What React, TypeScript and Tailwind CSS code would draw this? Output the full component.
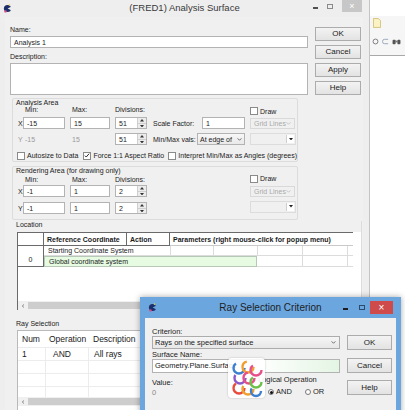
import React from 'react';

function AppIcon({ notch = '#eeeeee', className = '' }: { notch?: string; className?: string }) {
  return (
    <svg viewBox="0 0 10 10" className={`w-[9px] h-[9px] shrink-0 ${className}`}>
      <circle cx="5" cy="5" r="4" fill="#1d2f6b" />
      <path d="M5.2 5 L10 2.6 L10 7.4 Z" fill={notch} />
      <circle cx="2.8" cy="8.2" r="1.3" fill="#e0488a" />
      <circle cx="7.2" cy="1.2" r="0.9" fill="#e8c840" />
    </svg>
  );
}

function Chevron({ color = '#444' }: { color?: string }) {
  return (
    <svg viewBox="0 0 6 4" className="w-[5px] h-[3px]">
      <path d="M0.5 0.5 L3 3 L5.5 0.5" stroke={color} strokeWidth="1" fill="none" />
    </svg>
  );
}

function TextBox({ value = '', className = '' }: { value?: string; className?: string }) {
  return (
    <div className={`h-[12px] shrink-0 bg-white border border-[#b3b3b3] flex items-center pl-[3px] text-[7px] leading-none text-[#1b1b1b] ${className}`}>
      {value}
    </div>
  );
}

function SpinBox({ value, className = '' }: { value: string; className?: string }) {
  return (
    <div className={`h-[12px] shrink-0 bg-white border border-[#b3b3b3] flex ${className}`}>
      <span className="flex-1 pl-[3px] flex items-center text-[7px] leading-none">{value}</span>
      <div className="w-[9px] flex flex-col border-l border-[#cfcfcf] bg-[#ececec]">
        <div className="flex-1 flex items-center justify-center">
          <svg viewBox="0 0 5 3" className="w-[4px] h-[2.5px]"><path d="M0 3 L2.5 0 L5 3 Z" fill="#333" /></svg>
        </div>
        <div className="flex-1 flex items-center justify-center border-t border-[#cfcfcf]">
          <svg viewBox="0 0 5 3" className="w-[4px] h-[2.5px]"><path d="M0 0 L2.5 3 L5 0 Z" fill="#333" /></svg>
        </div>
      </div>
    </div>
  );
}

function GridCombo({ className = '' }: { className?: string }) {
  return (
    <div className={`h-[11px] shrink-0 bg-[#f0f0f0] border border-[#d9d9d9] flex items-center justify-between px-[3px] text-[7px] leading-none text-[#a9a9a9] ${className}`}>
      <span>Grid Lines</span>
      <Chevron color="#b5b5b5" />
    </div>
  );
}

function EmptyCombo({ className = '' }: { className?: string }) {
  return (
    <div className={`h-[12px] shrink-0 bg-[#f0f0f0] border border-[#dcdcdc] flex items-center justify-end pr-[1px] ${className}`}>
      <div className="w-[8px] h-[8px] bg-white border-l border-[#cfcfcf] flex items-center justify-center">
        <svg viewBox="0 0 5 3" className="w-[4px] h-[2.5px]"><path d="M0 0 L2.5 3 L5 0 Z" fill="#222" /></svg>
      </div>
    </div>
  );
}

function Check({ checked = false, label, className = '' }: { checked?: boolean; label: string; className?: string }) {
  return (
    <div className={`flex items-center gap-[2px] shrink-0 ${className}`}>
      <div className="w-[8px] h-[8px] bg-white border border-[#8a8a8a] flex items-center justify-center">
        {checked && (
          <svg viewBox="0 0 8 8" className="w-[7px] h-[7px]">
            <path d="M1.2 4.2 L3 6 L6.8 1.6" stroke="#222" strokeWidth="1.3" fill="none" />
          </svg>
        )}
      </div>
      <span className="text-[7px] leading-none">{label}</span>
    </div>
  );
}

function Btn({ label, className = '' }: { label: string; className?: string }) {
  return (
    <div className={`shrink-0 border border-[#acacac] bg-linear-to-b from-[#f3f3f3] to-[#e3e3e3] flex items-center justify-center text-[8px] leading-none text-[#1b1b1b] ${className}`}>
      {label}
    </div>
  );
}

function MainWindow() {
  return (
    <div className="w-[370px] h-full shrink-0 bg-[#eeeeee] border-r border-[#c4c4c4] flex flex-col">
      {/* title bar */}
      <div className="relative h-[17px] shrink-0 flex items-center">
        <AppIcon className="ml-[3px] mb-[1px]" />
        <div className="absolute inset-0 flex items-center justify-center text-[9.5px] text-[#3a3a3a]">
          (FRED1) Analysis Surface
        </div>
        <div className="relative ml-auto mr-[7px] flex items-start self-start">
          <div className="w-[13px] h-[12px] flex items-center justify-center">
            <div className="w-[5px] h-[2px] bg-[#505050] mt-[3px]" />
          </div>
          <div className="w-[16px] h-[12px] flex items-center justify-center">
            <div className="w-[6px] h-[5px] border border-[#8a8a8a]" />
          </div>
          <div className="ml-[4px] w-[20px] h-[12px] bg-[#c7c7c7] flex items-center justify-center text-[9px] leading-none text-white">
            ×
          </div>
        </div>
      </div>

      {/* client area */}
      <div className="ml-[5px] w-[358px] flex-1 bg-[#f0f0f0] flex flex-col">
        <div className="flex pl-[5px]">
          <div className="w-[298px] flex flex-col">
            <div className="mt-[9px] h-[8px] text-[7px] leading-[8px]">Name:</div>
            <TextBox value="Analysis 1" className="mt-[2px]" />
            <div className="mt-[5px] h-[8px] text-[7px] leading-[8px]">Description:</div>
            <div className="mt-[2px] h-[32px] bg-white border border-[#b3b3b3]" />
          </div>
          <div className="ml-[7px] w-[46px] flex flex-col pt-[10px] gap-[4px]">
            <Btn label="OK" className="h-[14px]" />
            <Btn label="Cancel" className="h-[14px]" />
            <Btn label="Apply" className="h-[14px]" />
            <Btn label="Help" className="h-[14px]" />
          </div>
        </div>

        {/* Analysis Area */}
        <div className="ml-[7px] mt-[3px] w-[286px] border border-[#dcdcdc] rounded-[2px] pb-[1px] text-[7px] leading-none">
          <div className="ml-[3px] h-[7px] leading-[7px]">Analysis Area</div>
          <div className="flex items-center h-[7px] pl-[12px]">
            <span className="w-[47px]">Min:</span>
            <span className="w-[43px]">Max:</span>
            <span className="w-[135px]">Divisions:</span>
            <Check label="Draw" className="mt-[3px]" />
          </div>
          <div className="flex items-center mt-[4px] pl-[5px]">
            <span className="w-[5px]">X</span>
            <TextBox value="-15" className="w-[42px]" />
            <TextBox value="15" className="w-[40px] ml-[5px]" />
            <SpinBox value="51" className="w-[32px] ml-[5px]" />
            <span className="w-[49px] ml-[6px]">Scale Factor:</span>
            <TextBox value="1" className="w-[43px]" />
            <GridCombo className="w-[45px] ml-[5px]" />
          </div>
          <div className="flex items-center mt-[4px] pl-[5px] text-[#9a9a9a]">
            <span className="w-[5px]">Y</span>
            <span className="w-[42px] pl-[2px]">-15</span>
            <span className="w-[40px] ml-[5px] pl-[2px]">15</span>
            <SpinBox value="51" className="w-[32px] ml-[5px] text-[#1b1b1b]" />
            <span className="w-[44px] ml-[6px] text-[#1b1b1b]">Min/Max vals:</span>
            <div className="w-[48px] h-[12px] bg-linear-to-b from-[#f7f7f7] to-[#e9e9e9] border border-[#b3b3b3] flex items-center justify-between px-[2px] text-[#1b1b1b]">
              <span>At edge of</span>
              <Chevron />
            </div>
            <EmptyCombo className="w-[46px] ml-[5px]" />
          </div>
          <div className="flex items-center mt-[6px] h-[9px] pl-[4px]">
            <div className="w-[68px]"><Check label="Autosize to Data" /></div>
            <div className="w-[87px]"><Check checked label="Force 1:1 Aspect Ratio" /></div>
            <Check label="Interpret Min/Max as Angles (degrees)" />
          </div>
        </div>

        {/* Rendering Area */}
        <div className="ml-[7px] mt-[4px] w-[286px] border border-[#dcdcdc] rounded-[2px] pb-[5px] text-[7px] leading-none">
          <div className="ml-[3px] h-[7px] leading-[7px]">Rendering Area (for drawing only)</div>
          <div className="flex items-center h-[7px] mt-[2px] pl-[12px]">
            <span className="w-[47px]">Min:</span>
            <span className="w-[43px]">Max:</span>
            <span className="w-[135px]">Divisions:</span>
            <Check label="Draw" className="-mt-[2px]" />
          </div>
          <div className="flex items-center mt-[2px] pl-[5px]">
            <span className="w-[5px]">X</span>
            <TextBox value="-1" className="w-[42px]" />
            <TextBox value="1" className="w-[40px] ml-[5px]" />
            <SpinBox value="2" className="w-[32px] ml-[5px]" />
            <GridCombo className="w-[45px] ml-[103px]" />
          </div>
          <div className="flex items-center mt-[5px] pl-[5px]">
            <span className="w-[5px]">Y</span>
            <TextBox value="-1" className="w-[42px]" />
            <TextBox value="1" className="w-[40px] ml-[5px]" />
            <SpinBox value="2" className="w-[32px] ml-[5px]" />
            <EmptyCombo className="w-[46px] ml-[103px] -mt-[3px]" />
          </div>
        </div>

        {/* Location */}
        <div className="ml-[7px] mt-[1px] w-[350px] border-r border-[#dcdcdc] text-[7px] leading-none">
          <div className="ml-[4px] h-[8px] leading-[8px]">Location</div>
          <div className="ml-[5px] mt-[3px] w-[344px] h-[78px] bg-white border-l border-[#6a6a6a] flex flex-col">
            <div className="flex h-[14px] shrink-0">
              <div className="w-[26px] border-t border-r border-b border-[#6a6a6a]" />
              <div className="w-[83px] border-t border-r border-b border-[#6a6a6a] pl-[3px] flex items-center font-bold">Reference Coordinate</div>
              <div className="w-[43px] border-t border-r border-b border-[#6a6a6a] pl-[3px] flex items-center font-bold">Action</div>
              <div className="w-[183px] border-t border-b border-t-[#6a6a6a] border-b-[#c9c9c9] pl-[3px] flex items-center font-bold">
                Parameters (right mouse-click for popup menu)
              </div>
            </div>
            <div className="flex shrink-0">
              <div className="w-[26px] h-[21px] border-r border-b border-[#6a6a6a] flex items-end justify-center pb-[3px]">0</div>
              <div className="flex flex-col">
                <div className="flex h-[10px]">
                  <div className="w-[126px] pl-[4px] flex items-center border-b border-[#dcdcdc]">Starting Coordinate System</div>
                  <div className="w-[43px] border-l border-b border-[#dcdcdc]" />
                  <div className="w-[44px] border-l border-b border-[#dcdcdc]" />
                  <div className="w-[45px] border-l border-b border-[#dcdcdc]" />
                  <div className="w-[45px] border-l border-b border-[#dcdcdc]" />
                  <div className="w-[6px] border-l border-b border-[#dcdcdc]" />
                </div>
                <div className="flex h-[11px]">
                  <div className="w-[213px] pl-[4px] flex items-center bg-[#e6fbe2] border border-[#b8c8b8]">Global coordinate system</div>
                  <div className="w-[45px] border-b border-[#dcdcdc]" />
                  <div className="w-[45px] border-l border-b border-[#dcdcdc]" />
                  <div className="w-[6px] border-l border-b border-[#dcdcdc]" />
                </div>
              </div>
            </div>
            <div className="flex-1" />
            <div className="h-[9px] shrink-0 bg-[#f0f0f0] flex items-center">
              <div className="w-[10px] flex items-center justify-center">
                <svg viewBox="0 0 3 5" className="w-[2.5px] h-[4px]"><path d="M2.5 0.3 L0.5 2.5 L2.5 4.7" stroke="#555" strokeWidth="0.9" fill="none" /></svg>
              </div>
              <div className="w-[230px] h-[7px] bg-[#cdcdcd]" />
            </div>
          </div>
        </div>

        {/* Ray Selection */}
        <div className="ml-[11px] mt-[10px] h-[8px] text-[7px] leading-[8px]">Ray Selection</div>
        <div className="ml-[12px] mt-[2px] w-[340px] flex-1 bg-white border-l border-t border-[#b9b9b9] flex flex-col text-[8.5px] leading-none">
          <div className="flex h-[17px] items-center border-b border-[#ececec]">
            <span className="w-[28px] pl-[4px]">Num</span>
            <span className="w-[43px] pl-[3px]">Operation</span>
            <span className="pl-[4px]">Description</span>
          </div>
          <div className="flex h-[13px] items-center border-b border-[#ececec]">
            <span className="w-[28px] pl-[4px] h-full flex items-center border-r border-[#ececec]">1</span>
            <span className="w-[43px] pl-[7px] h-full flex items-center border-r border-[#ececec]">AND</span>
            <span className="pl-[5px]">All rays</span>
          </div>
          <div className="flex h-[13px] border-b border-[#ececec]">
            <span className="w-[28px] border-r border-[#ececec]" />
            <span className="w-[43px] border-r border-[#ececec]" />
          </div>
          <div className="flex h-[13px] border-b border-[#ececec]">
            <span className="w-[28px] border-r border-[#ececec]" />
            <span className="w-[43px] border-r border-[#ececec]" />
          </div>
          <div className="flex h-[10px]">
            <span className="w-[28px] border-r border-[#ececec]" />
            <span className="w-[43px] border-r border-[#ececec]" />
          </div>
          <div className="h-[9px] shrink-0 bg-[#f0f0f0] flex items-center">
            <div className="w-[10px] flex items-center justify-center">
              <svg viewBox="0 0 3 5" className="w-[2.5px] h-[4px]"><path d="M2.5 0.3 L0.5 2.5 L2.5 4.7" stroke="#555" strokeWidth="0.9" fill="none" /></svg>
            </div>
            <div className="w-[200px] h-[7px] bg-[#cdcdcd]" />
          </div>
        </div>
      </div>
    </div>
  );
}

function SideToolbar() {
  return (
    <div className="flex-1 h-full bg-white flex flex-col">
      <div className="h-[16px] shrink-0" />
      <div className="h-[40px] shrink-0 bg-[#f6f6f6] border-b border-[#a9a9a9] flex flex-col pl-[2px]">
        <svg viewBox="0 0 9 11" className="w-[8px] h-[10px] mt-[2px] ml-[1px]">
          <path d="M0.5 0.5 H6 L8.5 3 V10.5 H0.5 Z" fill="#fbf3c4" stroke="#c9b25a" strokeWidth="0.8" />
        </svg>
        <div className="flex items-center gap-[3px] mt-[10px]">
          <svg viewBox="0 0 8 8" className="w-[7px] h-[7px]">
            <circle cx="4" cy="4" r="2.8" stroke="#707070" strokeWidth="1" fill="none" />
          </svg>
          <svg viewBox="0 0 8 8" className="w-[7px] h-[7px]">
            <path d="M7 1.5 H3 A2.5 2.5 0 0 0 3 6.5 H7" stroke="#8fa0b8" strokeWidth="1" fill="none" />
          </svg>
          <svg viewBox="0 0 10 8" className="w-[9px] h-[7px]">
            <rect x="0.5" y="2" width="3.5" height="5" rx="1" fill="#555" />
            <rect x="6" y="2" width="3.5" height="5" rx="1" fill="#555" />
            <rect x="3.5" y="3" width="3" height="2" fill="#777" />
          </svg>
        </div>
      </div>
    </div>
  );
}

function Watermark() {
  return (
    <div className="absolute left-[83px] top-[40px] w-[37px] h-[40px] rounded-[4px] bg-white/90 shadow-[0_0_2px_rgba(0,0,0,0.25)] flex items-center justify-center">
      <svg viewBox="0 0 37 40" className="w-[37px] h-[40px]">
        <circle cx="11" cy="10" r="5.5" stroke="#3d7fd1" strokeWidth="2.4" fill="none" strokeDasharray="22 13" />
        <circle cx="20" cy="9" r="5.5" stroke="#f0a030" strokeWidth="2.4" fill="none" strokeDasharray="24 11" />
        <circle cx="28" cy="12" r="5.5" stroke="#e5508a" strokeWidth="2.4" fill="none" strokeDasharray="22 13" />
        <circle cx="12" cy="20" r="5.5" stroke="#8b5ac7" strokeWidth="2.4" fill="none" strokeDasharray="20 15" />
        <circle cx="21" cy="20" r="5.5" stroke="#e5508a" strokeWidth="2.4" fill="none" strokeDasharray="24 11" />
        <circle cx="28" cy="24" r="5.5" stroke="#6cc04a" strokeWidth="2.4" fill="none" strokeDasharray="22 13" />
        <circle cx="11" cy="30" r="5.5" stroke="#e84b3c" strokeWidth="2.4" fill="none" strokeDasharray="22 13" />
        <circle cx="20" cy="31" r="5.5" stroke="#f0a030" strokeWidth="2.4" fill="none" strokeDasharray="20 15" />
        <circle cx="28" cy="33" r="5" stroke="#3d7fd1" strokeWidth="2.4" fill="none" strokeDasharray="18 13" />
      </svg>
    </div>
  );
}

function RayDialog() {
  return (
    <div className="absolute left-[140px] top-[297px] w-[261px] h-[125px] bg-[#6ba6df] shadow-[0_0_6px_rgba(0,0,0,0.35)] flex flex-col">
      <div className="relative h-[21px] shrink-0 flex items-center">
        <AppIcon notch="#6ba6df" className="ml-[8px]" />
        <div className="absolute inset-0 flex items-center justify-center text-[10px] text-[#1e1e1e]">
          Ray Selection Criterion
        </div>
        <div className="relative ml-auto mr-[8px] flex items-start self-start pt-[4px]">
          <div className="w-[10px] h-[12px] flex items-center justify-center">
            <div className="w-[5px] h-[2px] bg-[#1e1e1e] mt-[3px]" />
          </div>
          <div className="ml-[6px] w-[12px] h-[12px] flex items-center justify-center">
            <div className="w-[6px] h-[5px] border border-[#2a4a70]" />
          </div>
          <div className="ml-[2px] w-[23px] h-[13px] bg-[#cf4b4b] flex items-center justify-center text-[10px] leading-none text-white">
            ×
          </div>
        </div>
      </div>
      <div className="relative ml-[5px] w-[251px] flex-1 bg-[#f0f0f0] flex text-[7.5px] leading-none text-[#1b1b1b]">
        <div className="ml-[7px] w-[188px] flex flex-col">
          <div className="mt-[10px] h-[8px] leading-[8px]">Criterion:</div>
          <div className="h-[13px] bg-linear-to-b from-[#f6f6f6] to-[#e7e7e7] border border-[#acacac] flex items-center justify-between pl-[2px] pr-[3px]">
            <span>Rays on the specified surface</span>
            <Chevron />
          </div>
          <div className="mt-[2px] h-[8px] leading-[8px]">Surface Name:</div>
          <div className="h-[14px] bg-linear-to-r from-white from-55% to-[#e4f5e4] border border-[#b3b3b3] flex items-center pl-[2px]">
            Geometry.Plane.Surface
          </div>
          <div className="flex">
            <div className="w-[106px] flex flex-col">
              <div className="mt-[6px] h-[8px] leading-[8px]">Value:</div>
              <div className="mt-[2px] h-[8px] leading-[8px] text-[#8a8a8a]">0</div>
            </div>
            <div className="flex flex-col">
              <div className="mt-[3px] h-[8px] leading-[8px]">Logical Operation</div>
              <div className="mt-[4px] h-[8px] flex items-center pl-[10px]">
                <div className="w-[37px] flex items-center gap-[2px]">
                  <div className="w-[6px] h-[6px] rounded-full bg-white border border-[#777] flex items-center justify-center">
                    <div className="w-[3px] h-[3px] rounded-full bg-[#111]" />
                  </div>
                  <span>AND</span>
                </div>
                <div className="flex items-center gap-[2px]">
                  <div className="w-[6px] h-[6px] rounded-full bg-white border border-[#777]" />
                  <span>OR</span>
                </div>
              </div>
            </div>
          </div>
        </div>
        <div className="ml-[7px] w-[45px] flex flex-col">
          <Btn label="OK" className="mt-[17px] h-[15px] text-[7.5px]" />
          <Btn label="Cancel" className="mt-[8px] h-[15px] text-[7.5px]" />
          <Btn label="Help" className="mt-[7px] h-[15px] text-[7.5px]" />
        </div>
        <Watermark />
      </div>
    </div>
  );
}

export default function App() {
  return (
    <div className="relative w-[405px] h-[410px] overflow-hidden bg-white flex font-['Liberation_Sans',sans-serif] text-[#1b1b1b]">
      <MainWindow />
      <SideToolbar />
      <RayDialog />
    </div>
  );
}
